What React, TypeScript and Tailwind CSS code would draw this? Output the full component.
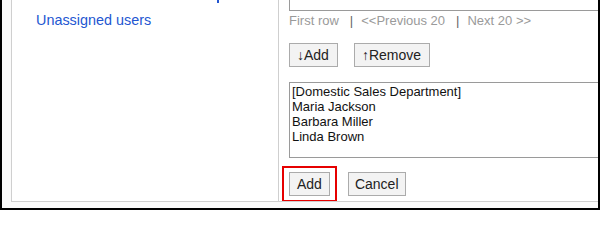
import React from "react";

const font = { fontFamily: '"Liberation Sans", Arial, sans-serif' };

function GrayButton({ children, className = "px-[6px]" }: { children: React.ReactNode; className?: string }) {
  return (
    <button
      type="button"
      className={`h-[24px] border border-[#ababab] bg-[#f3f3f3] text-[14px] leading-[22px] text-[#222] ${className}`}
    >
      {children}
    </button>
  );
}

function Pipe() {
  return <span className="ml-[11px] mr-[8px] text-[#666]">|</span>;
}

export default function App() {
  const members = ["[Domestic Sales Department]", "Maria Jackson", "Barbara Miller", "Linda Brown"];

  return (
    <div
      className="h-[210px] w-[600px] overflow-hidden border-x-2 border-b-2 border-black bg-[#fafafa] pb-[6px] pl-[9px]"
      style={font}
    >
      <div className="flex h-full border-b border-l border-[#cfcfcf] bg-white">
        <div className="w-[267px] shrink-0 border-r border-[#cfcfcf]">
          <div className="ml-[205px] h-[3px] w-[2px] bg-[#2356d1]" />
          <a href="#" className="mt-[9px] ml-[24px] block text-[14.4px] leading-[16px] text-[#2356d1]">
            Unassigned users
          </a>
        </div>

        <div className="min-w-0 flex-1 overflow-hidden pl-[10px]">
          <div className="h-[11px] w-[340px] border-b border-l border-[#9a9a9a]" />

          <p className="mt-[2px] whitespace-nowrap text-[13px] leading-[15px] text-[#9a9a9a]">
            First row
            <Pipe />
            &lt;&lt;Previous 20
            <Pipe />
            Next 20 &gt;&gt;
          </p>

          <div className="mt-[15px] flex gap-[16px]">
            <GrayButton className="pl-[7px] pr-[8px]">↓Add</GrayButton>
            <GrayButton className="pl-[7px] pr-[8px]">↑Remove</GrayButton>
          </div>

          <div className="mt-[15px] h-[76px] w-[340px] border border-[#9a9a9a] px-[2px] pt-[1px] text-[13px] leading-[15px] text-[#111]">
            {members.map((m) => (
              <div key={m}>{m}</div>
            ))}
          </div>

          <div className="mt-[14px] flex">
            <div className="relative">
              <GrayButton className="px-[7px]">Add</GrayButton>
              <div className="pointer-events-none absolute -inset-x-[7px] -inset-y-[6px] border-2 border-[#e60000]" />
            </div>
            <GrayButton className="ml-[18px] px-[6px]">Cancel</GrayButton>
          </div>
        </div>
      </div>
    </div>
  );
}
